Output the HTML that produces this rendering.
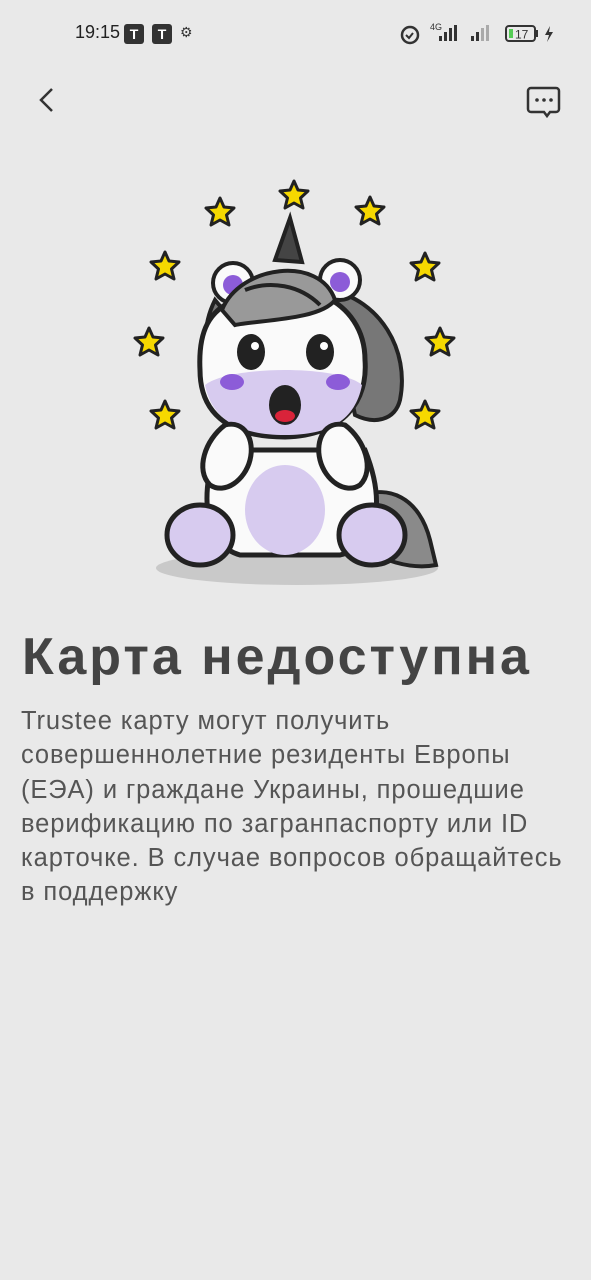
<!DOCTYPE html>
<html><head><meta charset="utf-8"><style>
html,body{margin:0;padding:0;}
body{width:591px;height:1280px;background:#e9e9e9;position:relative;overflow:hidden;font-family:"Liberation Sans",sans-serif;}
.sb{position:absolute;top:22px;font-size:18px;color:#222;}
h1{position:absolute;left:22px;top:625px;margin:0;font-size:52px;font-weight:bold;color:#444;letter-spacing:3px;white-space:nowrap;line-height:64px;}
.p{position:absolute;left:21px;top:704px;font-size:25.5px;letter-spacing:0.9px;line-height:34.3px;color:#555;white-space:nowrap;}
</style></head><body>
<div class="sb" style="left:75px;">19:15</div>
<div style="position:absolute;left:124px;top:24px;width:20px;height:20px;background:#333;border-radius:3px;color:#fff;font-size:14px;text-align:center;line-height:20px;font-weight:bold">T</div>
<div style="position:absolute;left:152px;top:24px;width:20px;height:20px;background:#333;border-radius:3px;color:#fff;font-size:14px;text-align:center;line-height:20px;font-weight:bold">T</div>
<div style="position:absolute;left:180px;top:24px;font-size:14px;color:#333">⚙</div>
<svg style="position:absolute;left:395px;top:20px" width="170" height="28" viewBox="0 0 170 28">
<circle cx="15" cy="15" r="8" fill="none" stroke="#333" stroke-width="2.5"/>
<path d="M11 15l3 3 4-5" stroke="#333" stroke-width="2" fill="none"/>
<text x="35" y="10" font-size="9" fill="#333" font-family="Liberation Sans">4G</text>
<rect x="44" y="16" width="3" height="5" fill="#333"/><rect x="49" y="12" width="3" height="9" fill="#333"/><rect x="54" y="8" width="3" height="13" fill="#333"/><rect x="59" y="5" width="3" height="16" fill="#333"/>
<rect x="76" y="16" width="3" height="5" fill="#333"/><rect x="81" y="12" width="3" height="9" fill="#333"/><rect x="86" y="8" width="3" height="13" fill="#aaa"/><rect x="91" y="5" width="3" height="16" fill="#aaa"/>
<rect x="111" y="6" width="29" height="15" rx="3" fill="none" stroke="#333" stroke-width="2"/>
<rect x="114" y="9" width="4" height="9" fill="#5c5"/>
<text x="120" y="18.5" font-size="12" fill="#333" font-family="Liberation Sans">17</text>
<rect x="141" y="10" width="2" height="7" fill="#333"/>
<path d="M155 6l-5 9h4l-2 7 6-10h-4z" fill="#333"/>
</svg>
<svg style="position:absolute;left:36px;top:86px" width="20" height="30"><path d="M16 3L5 14l11 11" stroke="#333" stroke-width="2.5" fill="none"/></svg>
<svg style="position:absolute;left:526px;top:85px" width="36" height="34"><path d="M5 3h25a3 3 0 0 1 3 3v18a3 3 0 0 1-3 3h-6l-3 4-3-4H5a3 3 0 0 1-3-3V6a3 3 0 0 1 3-3z" fill="none" stroke="#333" stroke-width="2.5"/><circle cx="11" cy="15" r="1.8" fill="#333"/><circle cx="18" cy="15" r="1.8" fill="#333"/><circle cx="25" cy="15" r="1.8" fill="#333"/></svg>

<svg style="position:absolute;left:0;top:170px" width="591" height="430" viewBox="0 170 591 430">
<defs><polygon id="st" points="0,-14 4,-5 14,-4 6.5,3 9,13 0,8 -9,13 -6.5,3 -14,-4 -4,-5" fill="#f6d800" stroke="#222" stroke-width="3" stroke-linejoin="round"/></defs>
<use href="#st" x="294" y="195"/><use href="#st" x="220" y="212"/><use href="#st" x="370" y="211"/>
<use href="#st" x="165" y="266"/><use href="#st" x="425" y="267"/><use href="#st" x="149" y="342"/>
<use href="#st" x="440" y="342"/><use href="#st" x="165" y="415"/><use href="#st" x="425" y="415"/>
<ellipse cx="297" cy="568" rx="141" ry="17" fill="#c9c9c9"/>
<path d="M350 500 C390 480 420 500 430 540 L436 565 C410 570 380 560 360 545 Z" fill="#8a8a8a" stroke="#222" stroke-width="4"/>
<path d="M330 290 C380 300 410 350 400 400 C395 420 375 425 355 415 Z" fill="#777" stroke="#222" stroke-width="4"/>
<path d="M215 300 C200 330 205 360 215 380 L240 330Z" fill="#777" stroke="#222" stroke-width="4"/>
<path d="M215 450 C200 500 205 545 240 555 L340 555 C380 545 385 500 365 450 Z" fill="#fafafa" stroke="#222" stroke-width="5"/>
<ellipse cx="285" cy="510" rx="40" ry="45" fill="#d7cbef"/>
<ellipse cx="200" cy="535" rx="33" ry="30" fill="#d7cbef" stroke="#222" stroke-width="5"/>
<ellipse cx="372" cy="535" rx="33" ry="30" fill="#d7cbef" stroke="#222" stroke-width="5"/>
<path d="M275 260 L290 218 L302 262 Z" fill="#444" stroke="#222" stroke-width="4"/>
<circle cx="233" cy="283" r="20" fill="#fafafa" stroke="#222" stroke-width="4"/><circle cx="233" cy="285" r="10" fill="#8c5cd8"/>
<circle cx="340" cy="280" r="20" fill="#fafafa" stroke="#222" stroke-width="4"/><circle cx="340" cy="282" r="10" fill="#8c5cd8"/>
<path d="M235 300 C300 270 365 300 365 360 C368 400 345 435 285 437 C225 437 200 410 200 370 C198 330 210 310 235 300Z" fill="#fafafa" stroke="#222" stroke-width="5"/>
<path d="M205 385 C230 365 340 365 362 385 C355 420 330 435 285 435 C240 435 212 420 205 385Z" fill="#d7cbef"/>
<ellipse cx="232" cy="382" rx="12" ry="8" fill="#8c5cd8"/><ellipse cx="338" cy="382" rx="12" ry="8" fill="#8c5cd8"/>
<path d="M222 310 C240 265 320 255 335 300 C320 320 260 320 235 325 Z" fill="#999" stroke="#222" stroke-width="4"/>
<path d="M245 290 C270 280 300 285 320 305" stroke="#222" stroke-width="4" fill="none"/>
<ellipse cx="251" cy="352" rx="14" ry="18" fill="#222"/><circle cx="255" cy="346" r="4" fill="#fff"/>
<ellipse cx="320" cy="352" rx="14" ry="18" fill="#222"/><circle cx="324" cy="346" r="4" fill="#fff"/>
<ellipse cx="285" cy="405" rx="16" ry="20" fill="#222"/><ellipse cx="285" cy="416" rx="10" ry="6" fill="#d9233a"/>
<path d="M225 425 C205 440 195 470 210 485 C225 495 245 480 250 460 C255 440 245 420 225 425Z" fill="#fafafa" stroke="#222" stroke-width="5"/>
<path d="M345 425 C365 440 375 470 360 485 C345 495 325 480 320 460 C315 440 325 420 345 425Z" fill="#fafafa" stroke="#222" stroke-width="5"/>
</svg>

<h1>Карта недоступна</h1>
<div class="p">Trustee карту могут получить<br>совершеннолетние резиденты Европы<br>(ЕЭА) и граждане Украины, прошедшие<br>верификацию по загранпаспорту или ID<br>карточке. В случае вопросов обращайтесь<br>в поддержку</div>
</body></html>
